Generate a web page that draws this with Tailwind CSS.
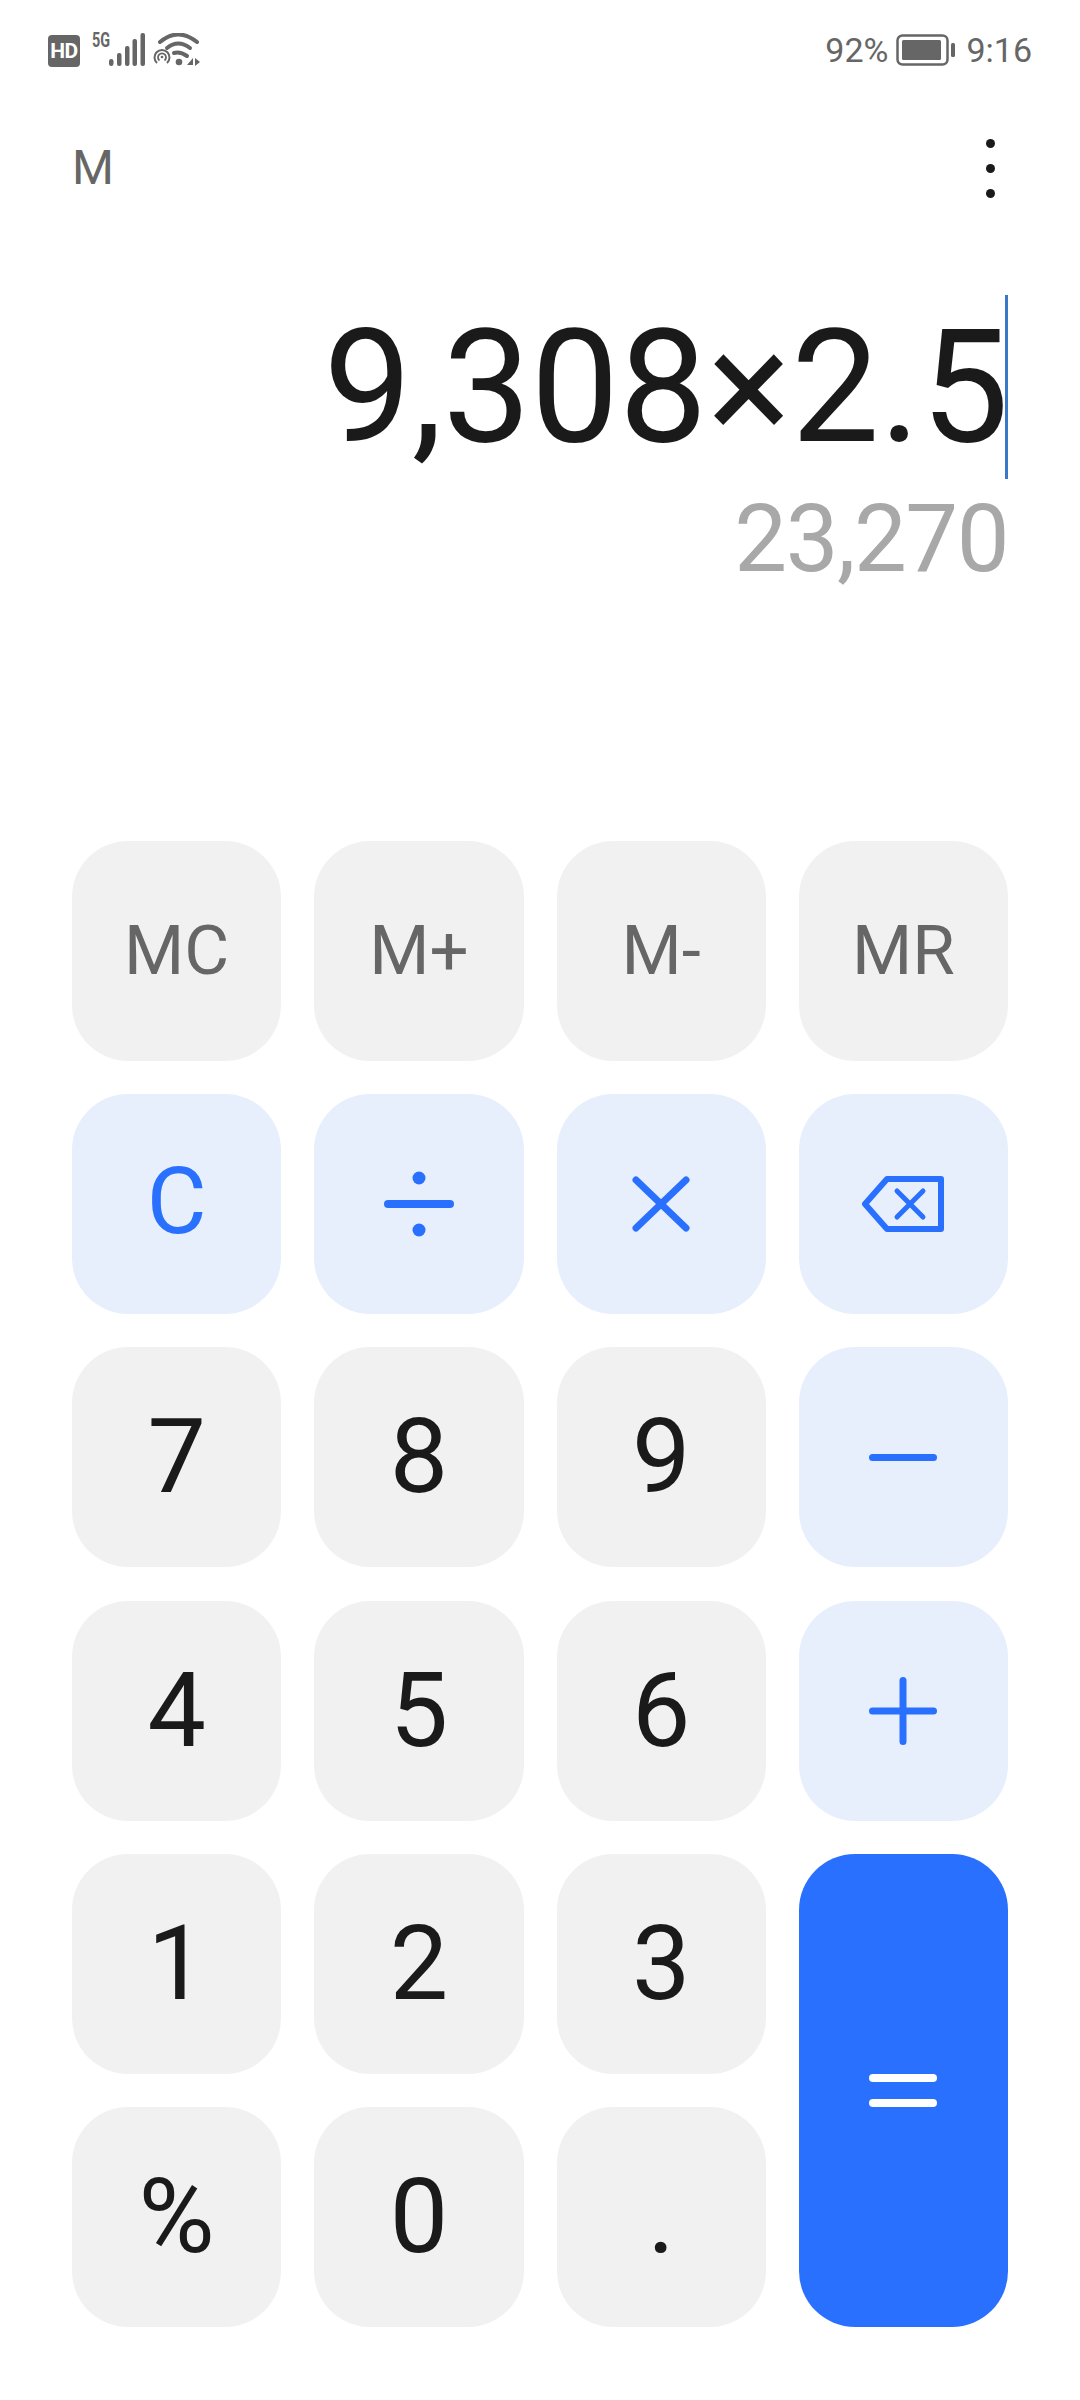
<!DOCTYPE html>
<html lang="en">
<head>
    <meta charset="UTF-8">
    <meta name="viewport" content="width=device-width, initial-scale=1.0">
    <title>Calculator</title>
    <script src="https://cdn.jsdelivr.net/npm/@tailwindcss/browser@4"></script>
</head>
<body class="bg-white font-['Roboto',sans-serif]">
<div class="w-[1080px] h-[2400px] flex flex-col overflow-hidden">

    <!-- Status bar -->
    <div class="h-[133px] flex items-start justify-between pl-[48px] pr-[48px] pt-[33px] text-[#666666]">
        <div class="flex items-start">
            <div class="w-[32px] h-[32px] mt-[2px] rounded-[4px] bg-[#666666] flex items-center justify-center text-white text-[21px] font-bold leading-none tracking-[-0.5px]">HD</div>
            <div class="relative w-[53px] h-[33px] ml-[12px]">
                <span class="absolute left-0 top-[-3px] text-[20px] font-bold leading-[20px] scale-x-[0.72] origin-left">5G</span>
                <svg class="absolute left-0 top-0" width="53" height="33" viewBox="0 0 53 33" fill="#666666">
                    <rect x="17" y="26" width="4.5" height="7" rx="2.2"/>
                    <rect x="25" y="20" width="4.5" height="13" rx="2"/>
                    <rect x="33" y="13" width="4.5" height="20" rx="2"/>
                    <rect x="40.5" y="6" width="4.5" height="27" rx="2"/>
                    <rect x="48.5" y="0" width="4.5" height="33" rx="2"/>
                </svg>
            </div>
            <svg class="ml-[8px]" width="48" height="34" viewBox="0 0 48 34" fill="none" stroke="#666666">
                <path d="M7 9 Q25 -6 44 9" stroke-width="4" stroke-linecap="round"/>
                <path d="M14 15 Q25 6 37 15" stroke-width="4" stroke-linecap="round"/>
                <path d="M21 20 Q27 18 34 23" stroke-width="4" stroke-linecap="round"/>
                <circle cx="26" cy="29" r="3.3" fill="#666666" stroke="none"/>
                <path d="M4 30 A7.5 7.5 0 1 1 14 30" stroke-width="2"/>
                <path d="M6.5 27.5 A4 4 0 1 1 11.5 27.5" stroke-width="1.8"/>
                <circle cx="9" cy="24" r="1.3" fill="#666666" stroke="none"/>
                <path d="M34 32 L40 25 V32 Z" fill="#666666" stroke="none"/>
                <path d="M42 25 L47 29 L42 33 Z" fill="#666666" stroke="none"/>
            </svg>
        </div>
        <div class="flex items-center text-[34px] leading-[34px]">
            <span>92%</span>
            <svg class="ml-[8px]" width="60" height="32" viewBox="0 0 60 32" fill="none">
                <rect x="1.5" y="1.5" width="50" height="29" rx="5" stroke="#666666" stroke-width="2.5"/>
                <rect x="6" y="6" width="39" height="20" rx="1.5" fill="#666666"/>
                <rect x="55" y="9" width="4" height="14" rx="1.5" fill="#666666"/>
            </svg>
            <span class="ml-[10px]">9:16</span>
        </div>
    </div>

    <!-- Memory + menu -->
    <div class="h-[70px] flex items-center justify-between pl-[72px] pr-[85px]">
        <span class="text-[48px] leading-none text-[#666666]">M</span>
        <div class="flex flex-col gap-[16px]">
            <div class="w-[9px] h-[9px] rounded-full bg-[#1a1a1a]"></div>
            <div class="w-[9px] h-[9px] rounded-full bg-[#1a1a1a]"></div>
            <div class="w-[9px] h-[9px] rounded-full bg-[#1a1a1a]"></div>
        </div>
    </div>

    <!-- Display -->
    <div class="h-[638px] flex flex-col items-end pr-[72px] pt-[92px]">
        <div class="flex items-center h-[184px]">
            <span class="text-[157px] leading-none text-[#1a1a1a]">9,308×2.5</span>
            <div class="w-[3px] h-[184px] -ml-[4px] bg-[#3a78c9]"></div>
        </div>
        <div class="text-[94px] leading-none tracking-[-1.5px] text-[#a8a8a8] mt-[13px]">23,270</div>
    </div>

    <!-- Keypad -->
    <div class="px-[72px] grid grid-cols-4 grid-rows-[repeat(6,220px)] gap-x-[33px] gap-y-[33.2px]">
        <button class="rounded-[56px] bg-[#f1f1f1] text-[#666666] text-[69px] flex items-center justify-center">MC</button>
        <button class="rounded-[56px] bg-[#f1f1f1] text-[#666666] text-[69px] flex items-center justify-center">M+</button>
        <button class="rounded-[56px] bg-[#f1f1f1] text-[#666666] text-[69px] flex items-center justify-center">M-</button>
        <button class="rounded-[56px] bg-[#f1f1f1] text-[#666666] text-[69px] flex items-center justify-center">MR</button>

        <button class="rounded-[56px] bg-[#e7effd] text-[#2970ff] text-[92px] pb-[5px] flex items-center justify-center">C</button>
        <button class="rounded-[56px] bg-[#e7effd] flex items-center justify-center">
            <svg width="70" height="66" viewBox="0 0 70 66" fill="#2970ff">
                <circle cx="35" cy="7" r="6.5"/>
                <rect x="0" y="29" width="70" height="8" rx="4"/>
                <circle cx="35" cy="59" r="6.5"/>
            </svg>
        </button>
        <button class="rounded-[56px] bg-[#e7effd] flex items-center justify-center">
            <svg width="58" height="56" viewBox="0 0 58 56" fill="none" stroke="#2970ff" stroke-width="7" stroke-linecap="round">
                <path d="M4 4 L54 52 M54 4 L4 52"/>
            </svg>
        </button>
        <button class="rounded-[56px] bg-[#e7effd] flex items-center justify-center">
            <svg width="82" height="56" viewBox="0 0 82 56" fill="none" stroke="#2970ff" stroke-linecap="round" stroke-linejoin="round">
                <path d="M25 3 H79 V53 H25 L3 28 Z" stroke-width="6"/>
                <path d="M35 15 L61 41 M61 15 L35 41" stroke-width="5"/>
            </svg>
        </button>

        <button class="rounded-[56px] bg-[#f1f1f1] text-[#1a1a1a] text-[104px] flex items-center justify-center">7</button>
        <button class="rounded-[56px] bg-[#f1f1f1] text-[#1a1a1a] text-[104px] flex items-center justify-center">8</button>
        <button class="rounded-[56px] bg-[#f1f1f1] text-[#1a1a1a] text-[104px] flex items-center justify-center">9</button>
        <button class="rounded-[56px] bg-[#e7effd] flex items-center justify-center">
            <div class="w-[68px] h-[7px] rounded-full bg-[#2970ff]"></div>
        </button>

        <button class="rounded-[56px] bg-[#f1f1f1] text-[#1a1a1a] text-[104px] flex items-center justify-center">4</button>
        <button class="rounded-[56px] bg-[#f1f1f1] text-[#1a1a1a] text-[104px] flex items-center justify-center">5</button>
        <button class="rounded-[56px] bg-[#f1f1f1] text-[#1a1a1a] text-[104px] flex items-center justify-center">6</button>
        <button class="rounded-[56px] bg-[#e7effd] flex items-center justify-center">
            <svg width="68" height="68" viewBox="0 0 68 68" fill="#2970ff">
                <rect x="0" y="30.5" width="68" height="7" rx="3.5"/>
                <rect x="30.5" y="0" width="7" height="68" rx="3.5"/>
            </svg>
        </button>

        <button class="rounded-[56px] bg-[#f1f1f1] text-[#1a1a1a] text-[104px] flex items-center justify-center">1</button>
        <button class="rounded-[56px] bg-[#f1f1f1] text-[#1a1a1a] text-[104px] flex items-center justify-center">2</button>
        <button class="rounded-[56px] bg-[#f1f1f1] text-[#1a1a1a] text-[104px] flex items-center justify-center">3</button>
        <button class="row-span-2 rounded-[56px] bg-[#2970ff] flex items-center justify-center">
            <div class="flex flex-col gap-[17px]">
                <div class="w-[68px] h-[8px] rounded-full bg-white"></div>
                <div class="w-[68px] h-[8px] rounded-full bg-white"></div>
            </div>
        </button>

        <button class="rounded-[56px] bg-[#f1f1f1] text-[#1a1a1a] text-[104px] flex items-center justify-center">%</button>
        <button class="rounded-[56px] bg-[#f1f1f1] text-[#1a1a1a] text-[104px] flex items-center justify-center">0</button>
        <button class="rounded-[56px] bg-[#f1f1f1] text-[#1a1a1a] text-[104px] flex items-center justify-center">.</button>
    </div>
</div>
</body>
</html>
